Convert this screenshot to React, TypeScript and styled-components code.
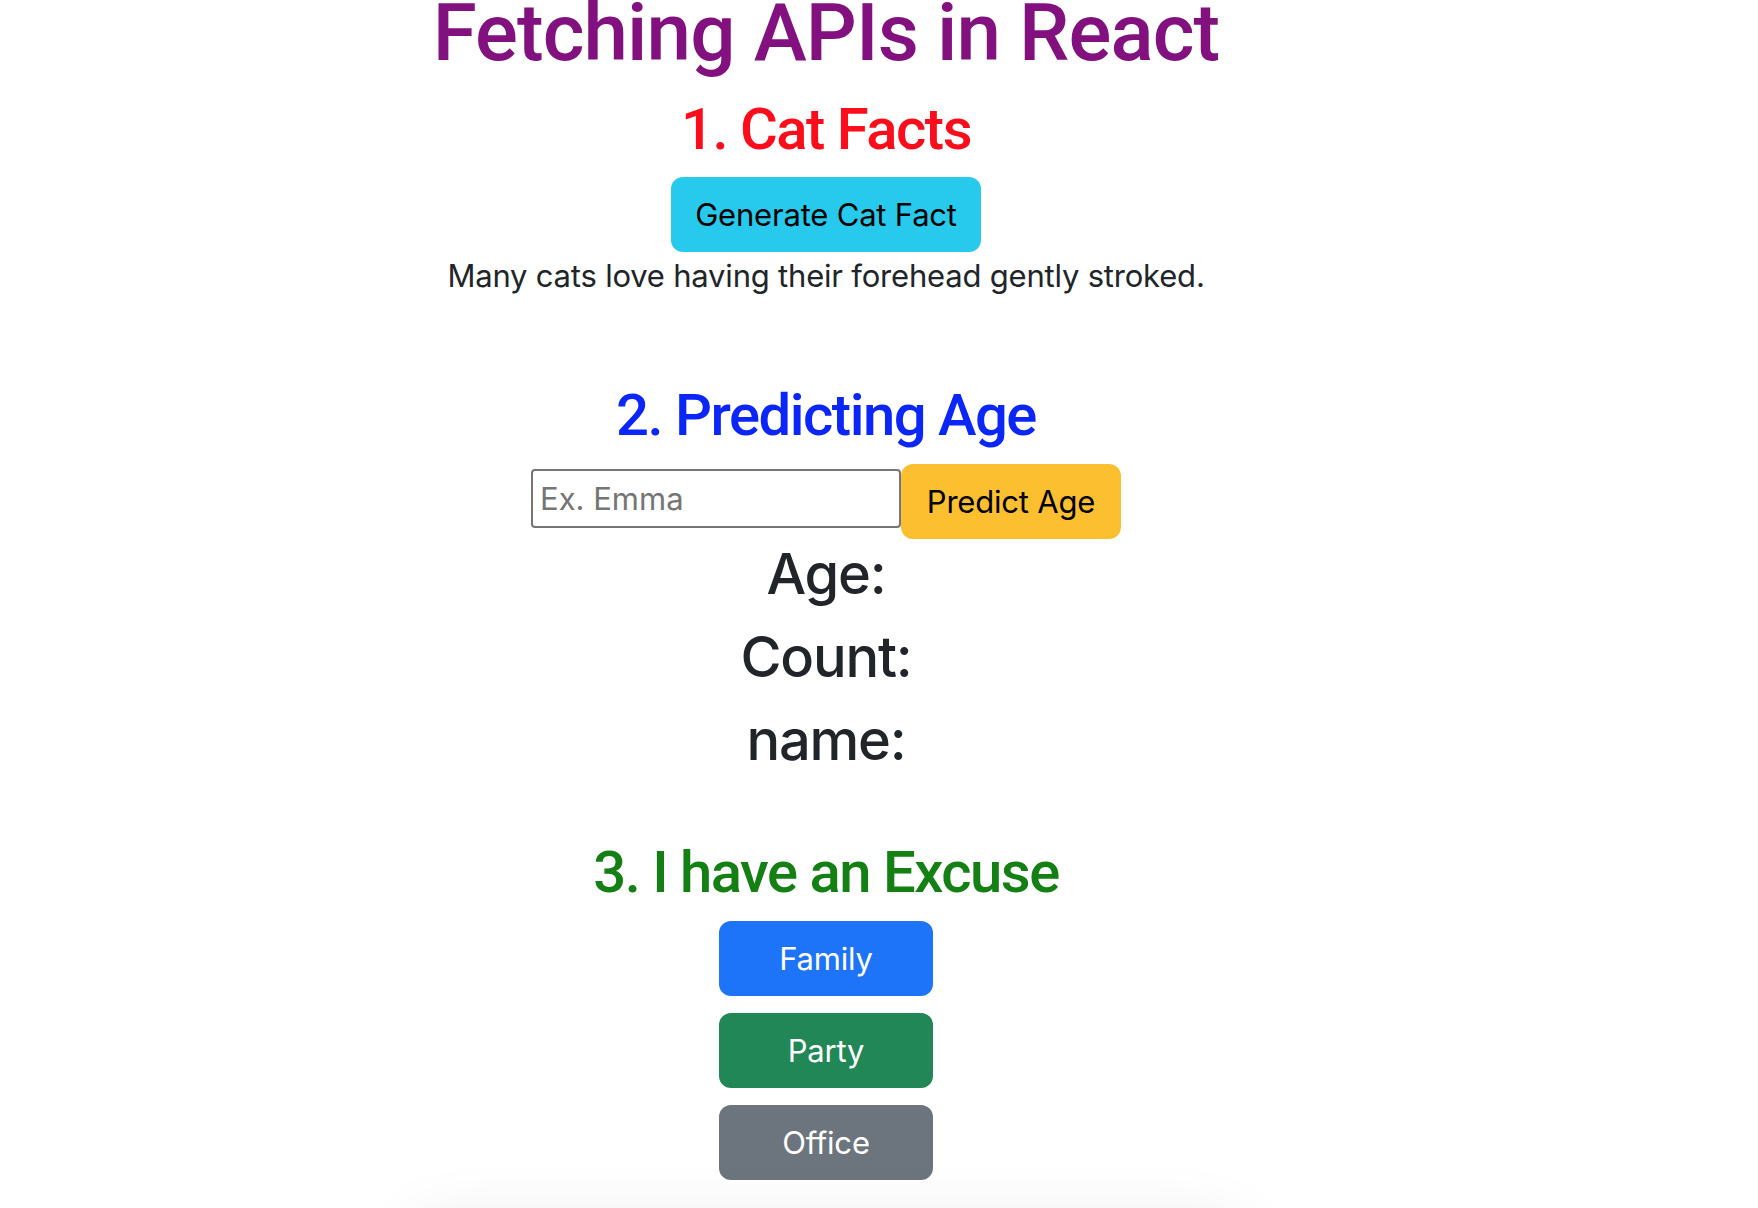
import React, { useState } from "react";
import styled, { createGlobalStyle } from "styled-components";

const GlobalStyle = createGlobalStyle`
  * {
    box-sizing: border-box;
  }

  body {
    margin: 0;
    background: #ffffff;
    color: #212529;
    font-family: Inter, "Noto Sans", sans-serif;
    overflow: hidden;
  }
`;

const Page = styled.div`
  width: 1652px;
  display: flex;
  flex-direction: column;
  align-items: center;
  text-align: center;
`;

const Title = styled.h1`
  margin: -15px 0 0;
  font-family: Roboto, "Noto Sans", sans-serif;
  font-size: 80px;
  line-height: 96px;
  font-weight: 500;
  letter-spacing: -0.9px;
  color: #82107f;
`;

const SectionTitle = styled.h2<{ $color: string; $top: number }>`
  margin: ${(p) => p.$top}px 0 0;
  font-family: Roboto, "Noto Sans", sans-serif;
  font-size: 58px;
  line-height: 77px;
  font-weight: 500;
  letter-spacing: -1.5px;
  color: ${(p) => p.$color};
`;

const Button = styled.button<{ $bg: string; $fg: string; $width?: number }>`
  height: 75px;
  width: ${(p) => (p.$width ? `${p.$width}px` : "auto")};
  padding: 0 24px;
  border: none;
  border-radius: 12px;
  background: ${(p) => p.$bg};
  color: ${(p) => p.$fg};
  font-family: Inter, "Noto Sans", sans-serif;
  font-size: 31px;
  font-weight: 400;
  letter-spacing: -0.2px;
  cursor: pointer;
`;

const CatButton = styled(Button)`
  margin-top: 9px;
`;

const Fact = styled.p`
  margin: 0;
  font-size: 31px;
  line-height: 48px;
  letter-spacing: -0.2px;
`;

const InputRow = styled.div`
  margin-top: 10px;
  display: flex;
  align-items: flex-start;
`;

const NameInput = styled.input`
  margin-top: 5px;
  width: 370px;
  height: 59px;
  padding: 0 7px;
  border: 2px solid #767676;
  border-radius: 4px;
  font-family: Inter, "Noto Sans", sans-serif;
  font-size: 31px;
  color: #212529;
  outline: none;

  &::placeholder {
    color: #757575;
  }
`;

const Results = styled.div`
  margin-top: 2px;
  display: flex;
  flex-direction: column;
  align-items: center;
`;

const Result = styled.h3`
  margin: 0 0 16px;
  font-size: 56px;
  line-height: 67px;
  font-weight: 500;
  letter-spacing: -1.2px;
  color: #212529;
`;

const ExcuseList = styled.div`
  margin-top: 10px;
  display: flex;
  flex-direction: column;
  gap: 17px;
`;

const ExcuseCard = styled.div`
  margin-top: 52px;
  width: 820px;
  height: 120px;
  border-radius: 24px;
  background: #ffffff;
  box-shadow: 0 0 70px rgba(0, 0, 0, 0.13);
`;

const excuses = [
  { label: "Family", bg: "#1d74f8" },
  { label: "Party", bg: "#218756" },
  { label: "Office", bg: "#6c757d" },
];

export default function App() {
  const [name, setName] = useState("");

  return (
    <>
      <GlobalStyle />
      <Page>
        <Title>Fetching APIs in React</Title>

        <SectionTitle $color="#fb0d1b" $top={10}>
          1. Cat Facts
        </SectionTitle>
        <CatButton $bg="#27caed" $fg="#000000">
          Generate Cat Fact
        </CatButton>
        <Fact>Many cats love having their forehead gently stroked.</Fact>

        <SectionTitle $color="#0b26f8" $top={77}>
          2. Predicting Age
        </SectionTitle>
        <InputRow>
          <NameInput
            placeholder="Ex. Emma"
            value={name}
            onChange={(e) => setName(e.target.value)}
          />
          <Button $bg="#fcbf2f" $fg="#000000" $width={220}>
            Predict Age
          </Button>
        </InputRow>
        <Results>
          <Result>Age:</Result>
          <Result>Count:</Result>
          <Result>name:</Result>
        </Results>

        <SectionTitle $color="#148014" $top={44}>
          3. I have an Excuse
        </SectionTitle>
        <ExcuseList>
          {excuses.map((ex) => (
            <Button key={ex.label} $bg={ex.bg} $fg="#ffffff" $width={214}>
              {ex.label}
            </Button>
          ))}
        </ExcuseList>
        <ExcuseCard />
      </Page>
    </>
  );
}
